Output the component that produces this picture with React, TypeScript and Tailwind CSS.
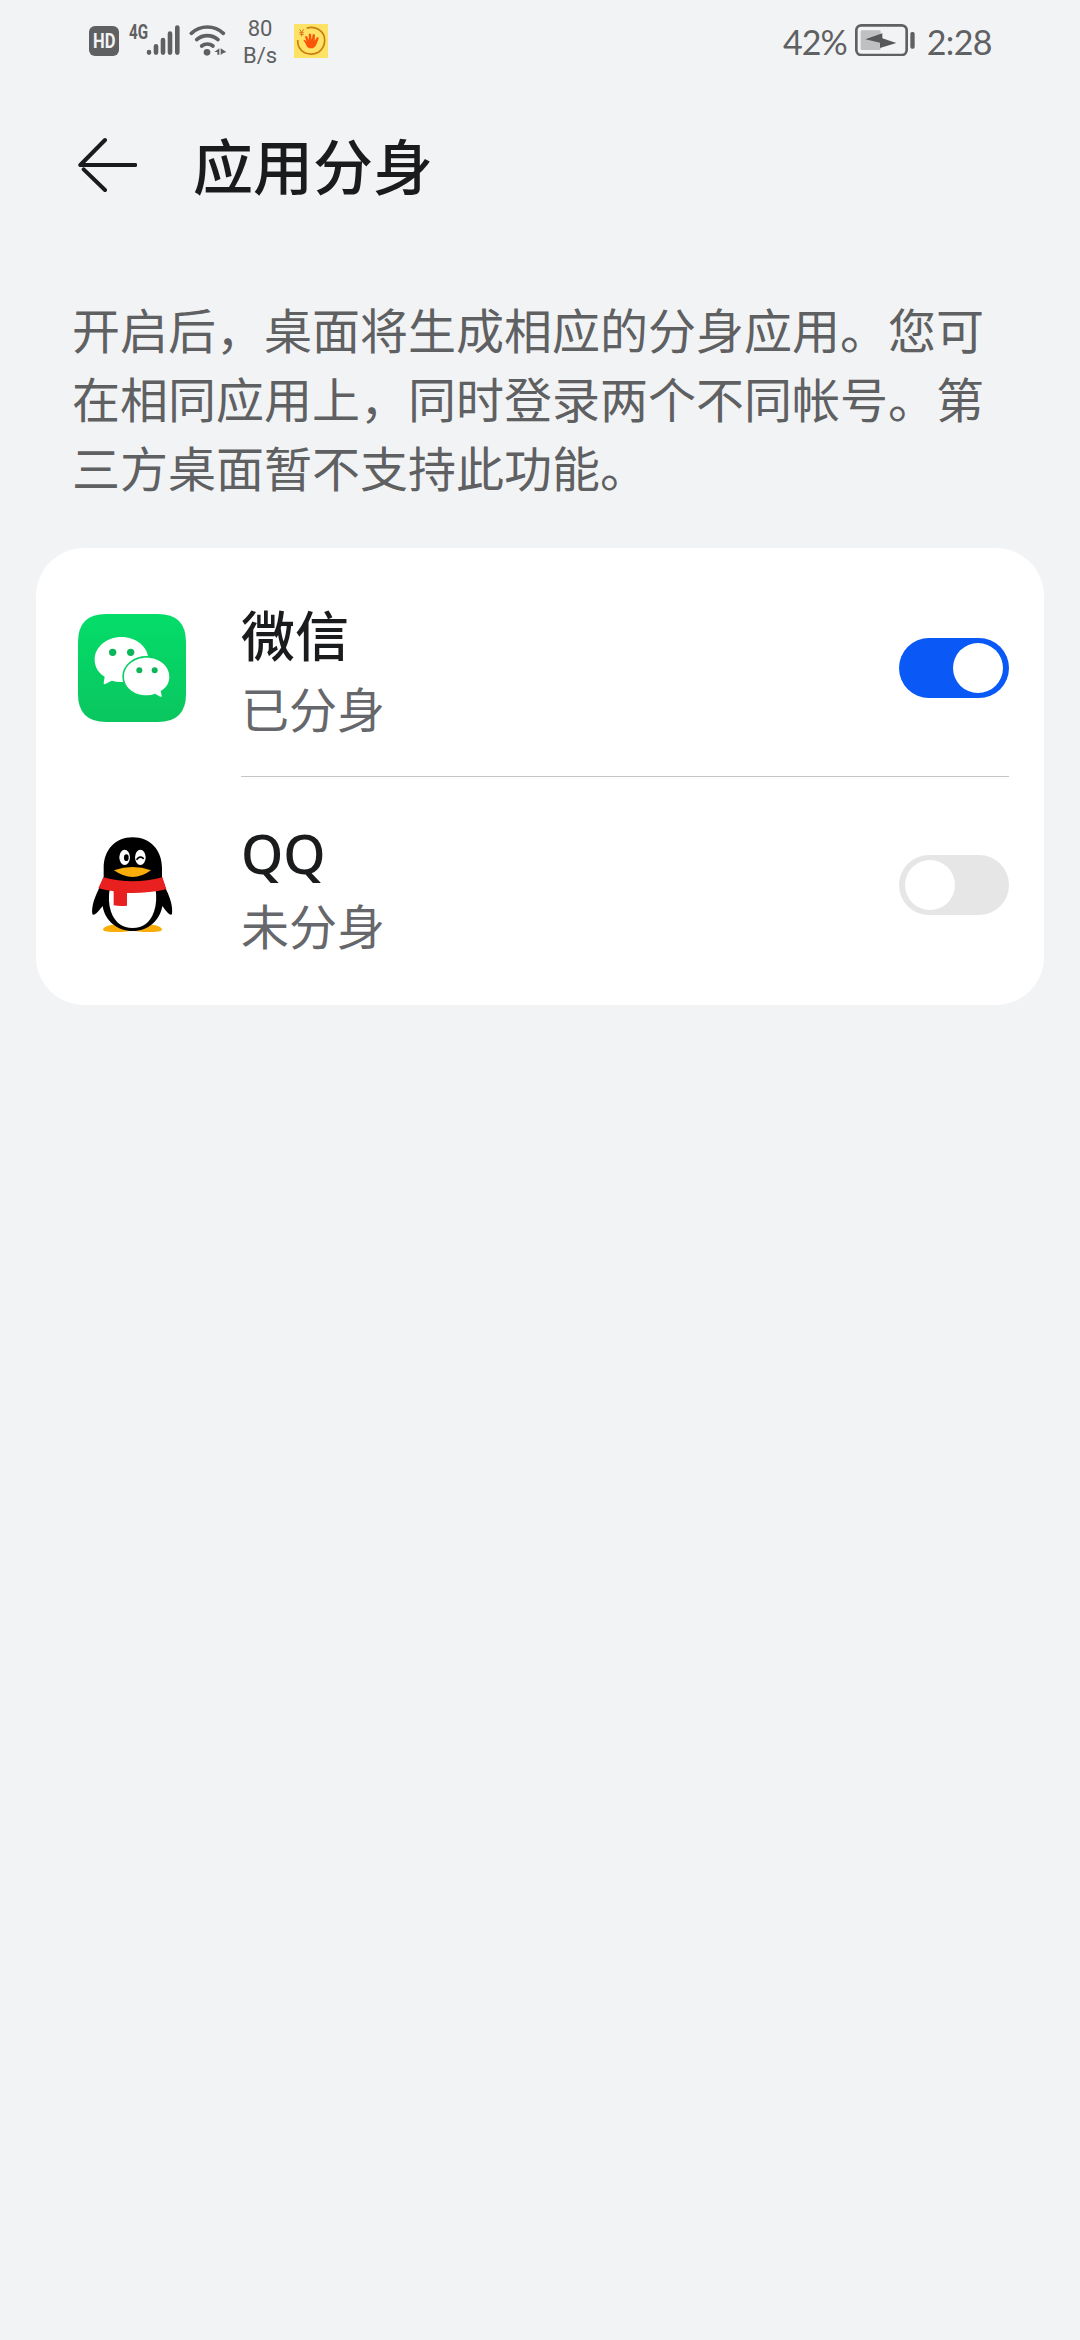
import { useState } from 'react';

type AppId = 'wechat' | 'qq';

type TwinApp = {
  id: AppId;
  name: string;
};

const APPS: TwinApp[] = [
  { id: 'wechat', name: '微信' },
  { id: 'qq', name: 'QQ' },
];

function SignalIcon() {
  return (
    <svg className="h-[32px] w-[34px]" viewBox="0 0 34 32" aria-hidden="true">
      <g stroke="#5f6062" strokeWidth="4.600" strokeLinecap="round">
        <path d="M3 28v.6M10 22.300v6.300M17 16v12.600M24 9.500v19.100M31.300 3.500v25.100" />
      </g>
    </svg>
  );
}

function WifiIcon() {
  return (
    <svg className="h-[32px] w-[38px]" viewBox="0 0 114 96" aria-hidden="true">
      <g fill="none" stroke="#5f6062" strokeWidth="11" strokeLinecap="round">
        <path d="M7 28Q27 9 55 9Q83 9 103 28" />
        <path d="M23 47Q37 35 55 35Q73 35 87 47" />
        <path d="M38 66Q45 60 55 60Q65 60 72 66" />
      </g>
      <circle cx="54" cy="85" r="10" fill="#5f6062" />
      <path d="M91 73v19h-6v-8h-9zM95 93v-20l17 11-10 4z" fill="#5f6062" />
    </svg>
  );
}

function PromoIcon() {
  return (
    <svg className="h-[34px] w-[34px]" viewBox="0 0 102 102" aria-hidden="true">
      <rect width="102" height="102" fill="#fee266" />
      <path
        d="M38 13Q56 6 73 16Q93 28 92 51Q91 72 73 85Q54 95 32 86Q10 75 11 48"
        fill="none"
        stroke="#c87f10"
        strokeWidth="5"
      />
      <path d="M17 16l6 9 6-9M23 25v12M16 26h13M17 31h12" fill="none" stroke="#d9721b" strokeWidth="3" />
      <path
        d="M28 48q4-3 10 5l-5-15q3-4 7 0l5 11-1-18q4-5 7 0l2 17 3-16q4-4 7 1l-1 17 7-10q6-1 5 4l-6 15q-5 14-17 14-12 0-16-14z"
        fill="#f9560a"
      />
    </svg>
  );
}

function BatteryIcon() {
  return (
    <svg className="h-[32px] w-[60px]" viewBox="0 0 180 96" aria-hidden="true">
      <rect x="17" y="19" width="60" height="59" rx="4" fill="#bfc0c2" />
      <rect x="4" y="4" width="151" height="89" rx="15" fill="none" stroke="#5f6062" strokeWidth="8" />
      <rect x="166" y="24" width="13" height="50" rx="5" fill="#5f6062" />
      <path d="M31 46L82 28V43L124 57L75 72V56Z" fill="#57585a" />
    </svg>
  );
}

function BackIcon() {
  return (
    <svg className="h-[60px] w-[60px]" viewBox="0 0 180 180" aria-hidden="true">
      <g fill="none" stroke="#1a1b1c" strokeWidth="12" strokeLinecap="round" strokeLinejoin="round">
        <path d="M84 15L10 90H175M20 103L84 165" />
      </g>
    </svg>
  );
}

function WechatIcon() {
  return (
    <svg className="h-[108px] w-[108px]" viewBox="54 72 324 324" aria-hidden="true">
      <defs>
        <linearGradient id="wechat-bg" x1="0" y1="0" x2="0" y2="1">
          <stop offset="0" stopColor="#04dd69" />
          <stop offset="1" stopColor="#0ac65f" />
        </linearGradient>
      </defs>
      <path
        d="M138 72H294Q378 72 378 156V312Q378 396 294 396H138Q54 396 54 312V156Q54 72 138 72Z"
        fill="url(#wechat-bg)"
      />
      <path
        d="M184 141C140 141 104 171 104 209C104 230 115 248 134 260L131 279Q131 284 136 282L155 272Q169 276 184 276C229 276 265 247 265 209C265 171 229 141 184 141Z"
        fill="#fff"
      />
      <path
        d="M260 203C222 203 192 228 192 260C192 292 222 316 260 316Q274 316 285 311L301 320Q306 322 305 317L302 303C319 293 328 278 328 260C328 228 298 203 260 203Z"
        fill="#fff"
        stroke="#07d063"
        strokeWidth="10"
        paintOrder="stroke"
      />
      <g fill="#0bb65a">
        <circle cx="158" cy="187" r="11" />
        <circle cx="212" cy="187" r="11" />
        <circle cx="238" cy="241" r="9" />
        <circle cx="284" cy="241" r="9" />
      </g>
    </svg>
  );
}

function QQIcon() {
  return (
    <svg className="h-[108px] w-[108px]" viewBox="54 93 324 324" aria-hidden="true">
      <path d="M160 374Q128 378 129 390Q132 396 170 396Q205 396 217 390Q229 396 265 396Q303 396 306 390Q307 378 275 374Z" fill="#f9ad08" />
      <path
        d="M218 112C165 112 131 150 131 205V232L115 270C103 295 94 320 97 342Q102 352 128 318C134 362 172 393 218 393C264 393 300 362 307 318Q331 352 336 342C339 320 331 295 319 270L306 232V205C306 150 271 112 218 112Z"
        fill="#000"
      />
      <path d="M150 262Q142 305 153 335Q171 384 218 384Q264 384 282 335Q293 305 286 262Z" fill="#fff" />
      <path d="M130 232Q218 256 307 232L319 268Q260 281 201 279V317Q180 319 161 316V274Q137 271 115 265Z" fill="#e8201f" />
      <ellipse cx="194" cy="172" rx="16" ry="23" fill="#fff" />
      <ellipse cx="241" cy="172" rx="16" ry="23" fill="#fff" />
      <ellipse cx="199" cy="173" rx="7" ry="10" fill="#000" />
      <path d="M231 178Q239 166 250 175" fill="none" stroke="#000" strokeWidth="5" strokeLinecap="round" />
      <path d="M162 211Q190 201 218 201Q246 201 273 211Q246 231 218 231Q190 231 162 211Z" fill="#f9ad08" />
    </svg>
  );
}

function StatusBar() {
  return (
    <header className="flex h-[82px] justify-between pl-[89px] pr-[88px] font-[Roboto,sans-serif] text-[#5f6062]">
      <div className="flex items-start">
        <span className="mt-[26px] flex h-[30px] w-[30px] items-center justify-center rounded-[6px] bg-[#5f6062] text-[18px] font-bold leading-none text-[#f2f3f5]">
          <span className="scale-x-[.92] scale-y-110">HD</span>
        </span>
        <span className="ml-[10px] mt-[22px] w-[17px] origin-left scale-x-[.76] text-[20px] font-bold leading-[20px]">4G</span>
        <div className="mt-[24px]">
          <SignalIcon />
        </div>
        <div className="ml-[9px] mt-[24px]">
          <WifiIcon />
        </div>
        <div className="ml-[14px] mt-[15px] flex w-[38px] flex-col items-center text-[22px] leading-[27px]">
          <span>80</span>
          <span>B/s</span>
        </div>
        <div className="ml-[15px] mt-[24px]">
          <PromoIcon />
        </div>
      </div>
      <div className="flex items-start font-[Lato,sans-serif] text-[34px] leading-[40px]">
        <span className="mt-[22px] tracking-[-1px]">42%</span>
        <div className="ml-[8px] mt-[24px]">
          <BatteryIcon />
        </div>
        <span className="ml-[12px] mt-[22px] tracking-[-.6px]">2:28</span>
      </div>
    </header>
  );
}

function Toggle({ checked, label, onChange }: { checked: boolean; label: string; onChange: () => void }) {
  return (
    <button
      type="button"
      role="switch"
      aria-checked={checked}
      aria-label={label}
      onClick={onChange}
      className={`flex h-[60px] w-[110px] items-center rounded-full px-[6px] ${
        checked ? 'justify-end bg-[#0a59f7]' : 'justify-start bg-[#e6e6e6]'
      }`}
    >
      <span className="h-[50px] w-[50px] rounded-full bg-white" />
    </button>
  );
}

export default function App() {
  const [enabled, setEnabled] = useState<Record<AppId, boolean>>({ wechat: true, qq: false });

  const toggle = (id: AppId) => setEnabled((prev) => ({ ...prev, [id]: !prev[id] }));

  return (
    <main lang="zh-CN" className="h-[2340px] w-[1080px] bg-[#f2f3f5] font-[Noto_Sans_CJK_SC,sans-serif]">
      <StatusBar />

      <div className="flex h-[166px] items-start pl-[77px] pt-[53px]">
        <button type="button" aria-label="返回">
          <BackIcon />
        </button>
        <h1 className="ml-[56px] -mt-[15px] text-[60px] font-medium leading-[88px] text-[#1a1b1c]">应用分身</h1>
      </div>

      <p className="w-[1010px] pl-[72px] pt-[46px] text-[48px] leading-[69px] text-[#5f6062]">
        开启后，桌面将生成相应的分身应用。您可
        <br />
        在相同应用上，同时登录两个不同帐号。第
        <br />
        三方桌面暂不支持此功能。
      </p>

      <section className="mx-[36px] mt-[47px] h-[457px] rounded-[48px] bg-white pl-[42px] pr-[35px] pt-[11px]">
        {APPS.map((app, i) => (
          <div key={app.id} className={`flex items-center ${i === 0 ? 'h-[218px]' : 'h-[216px]'}`}>
            {app.id === 'wechat' ? <WechatIcon /> : <QQIcon />}
            <div
              className={`ml-[55px] flex h-full flex-1 items-center justify-between ${
                i < APPS.length - 1 ? 'border-b border-[#c4c5c7]' : ''
              }`}
            >
              <div className="flex flex-col">
                <span
                  className={`font-medium text-[#1a1b1c] ${
                    app.id === 'qq'
                      ? 'pt-[4px] font-[Noto_Sans,sans-serif] text-[54px] leading-[73px]'
                      : 'text-[54px] leading-[78px]'
                  }`}
                >
                  {app.name}
                </span>
                <span className="text-[48px] leading-[68px] text-[#66676a]">
                  {enabled[app.id] ? '已分身' : '未分身'}
                </span>
              </div>
              <Toggle checked={enabled[app.id]} label={app.name} onChange={() => toggle(app.id)} />
            </div>
          </div>
        ))}
      </section>
    </main>
  );
}
